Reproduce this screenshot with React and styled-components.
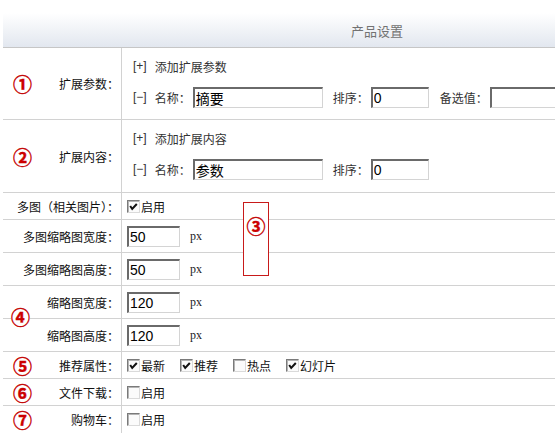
import React from "react";
import styled, { createGlobalStyle } from "styled-components";

const GlobalStyle = createGlobalStyle`
  html, body {
    margin: 0;
    padding: 0;
    background: #fff;
    overflow: hidden;
  }
  body {
    font-family: "Liberation Sans", "Noto Sans CJK SC", sans-serif;
    font-size: 12px;
    color: #222;
  }
`;

const Page = styled.div`
  padding: 13px 0 0 3px;
`;

const Table = styled.div`
  width: 748px;
`;

const Header = styled.div`
  height: 35px;
  box-sizing: border-box;
  border-bottom: 1px solid #c6c6c6;
  background: linear-gradient(#ffffff, #e2e7ef);
  display: flex;
  align-items: center;
  justify-content: center;
  color: #727272;
  font-size: 13px;
  font-family: "Noto Sans CJK SC", sans-serif;
`;

const Row = styled.div`
  display: flex;
  height: ${({ $h }) => $h}px;
  box-sizing: border-box;
  border-bottom: ${({ $last }) => ($last ? "none" : "1px solid #d2d2d2")};
`;

const Label = styled.div`
  position: relative;
  width: 119px;
  flex: none;
  box-sizing: border-box;
  border-right: 1px solid #d2d2d2;
  display: flex;
  align-items: center;
  justify-content: flex-end;
  padding-right: 2px;
  font-family: "Noto Sans CJK SC", sans-serif;
  color: #111;
`;

const Value = styled.div`
  position: relative;
  flex: 1;
  display: flex;
  flex-direction: ${({ $stack }) => ($stack ? "column" : "row")};
  align-items: ${({ $stack }) => ($stack ? "flex-start" : "center")};
  padding: ${({ $stack }) => ($stack ? "7px 0 0 11px" : "0 0 0 5px")};
  gap: ${({ $stack }) => ($stack ? "9px" : "0")};
  font-family: "Noto Sans CJK SC", sans-serif;
  color: #333;
`;

const Line = styled.div`
  display: flex;
  align-items: center;
  height: 22px;
  white-space: nowrap;
`;

const Bracket = styled.span`
  font-family: "Liberation Sans", sans-serif;
  margin-right: 8px;
`;

const FieldLabel = styled.span`
  margin: 0 2px 0 ${({ $gap }) => $gap}px;
`;

const TextInput = styled.input`
  width: ${({ $w }) => $w}px;
  height: 21px;
  box-sizing: border-box;
  margin: 0 0 0 ${({ $ml }) => $ml || 0}px;
  padding: 1px 0 0 1px;
  border-style: solid;
  border-width: 2px 1px 1px 2px;
  border-color: #6a6a6a #d4d4d4 #d4d4d4 #6a6a6a;
  background: #fff;
  font-family: "Liberation Sans", "Noto Sans CJK SC", sans-serif;
  font-size: 14px;
  color: #000;
  outline: none;
`;

const Unit = styled.span`
  margin-left: 10px;
  font-family: "Liberation Serif", serif;
  font-size: 12px;
  color: #222;
`;

const Mark = styled.span`
  margin-right: auto;
  margin-left: 10px;
  color: #d00000;
  font-family: "Noto Sans CJK SC", sans-serif;
  font-weight: 700;
  font-size: 19px;
  line-height: 19px;
  -webkit-text-stroke: 0.4px #c00000;
`;

const FloatMark = styled(Mark)`
  position: absolute;
  left: 0;
  top: ${({ $top }) => $top}px;
  margin: 0 0 0 8px;
  background: #fff;
`;

const Callout = styled.div`
  position: absolute;
  left: 121px;
  top: 9px;
  width: 26px;
  height: 74px;
  box-sizing: border-box;
  border: 1px solid #c81a1a;
  background: #fff;
  z-index: 1;
  display: flex;
  justify-content: center;
  padding-top: 13px;
  color: #d00000;
  font-family: "Noto Sans CJK SC", sans-serif;
  font-weight: 700;
  font-size: 19px;
  line-height: 19px;
  -webkit-text-stroke: 0.4px #c00000;
`;

const Options = styled.div`
  display: flex;
  align-items: center;
`;

const CheckItem = styled.label`
  display: inline-flex;
  align-items: center;
  gap: 1px;
  margin-right: ${({ $mr }) => $mr ?? 15}px;
  color: #111;
`;

const Box = styled.span`
  width: 13px;
  height: 13px;
  box-sizing: border-box;
  border-style: solid;
  border-width: 1px;
  border-color: #7a7a7a #dadada #dadada #7a7a7a;
  box-shadow: inset 1px 1px 0 #b4b4b4;
  background: #fbfbfb;
  display: inline-flex;
  svg {
    display: block;
  }
`;

const Check = ({ on, children, mr }) => (
  <CheckItem $mr={mr}>
    <Box>
      {on && (
        <svg width="11" height="11" viewBox="0 0 11 11">
          <polyline
            points="2.2,5 4.2,8 8.8,3"
            fill="none"
            stroke="#111"
            strokeWidth="2"
          />
        </svg>
      )}
    </Box>
    {children}
  </CheckItem>
);

const SizeRow = ({ label, value }) => (
  <>
    <Label>{label}</Label>
    <Value>
      <TextInput $w={53} defaultValue={value} />
      <Unit>px</Unit>
    </Value>
  </>
);

export default function App() {
  return (
    <Page>
      <GlobalStyle />
      <Table>
        <Header>产品设置</Header>

        <Row $h={72}>
          <Label>
            <Mark>①</Mark>扩展参数：
          </Label>
          <Value $stack>
            <Line>
              <Bracket>[+]</Bracket>添加扩展参数
            </Line>
            <Line>
              <Bracket>[−]</Bracket>名称：
              <TextInput $w={130} $ml={2} defaultValue="摘要" />
              <FieldLabel $gap={10}>排序：</FieldLabel>
              <TextInput $w={58} defaultValue="0" />
              <FieldLabel $gap={11}>备选值：</FieldLabel>
              <TextInput $w={130} defaultValue="" />
            </Line>
          </Value>
        </Row>

        <Row $h={73}>
          <Label>
            <Mark>②</Mark>扩展内容：
          </Label>
          <Value $stack>
            <Line>
              <Bracket>[+]</Bracket>添加扩展内容
            </Line>
            <Line>
              <Bracket>[−]</Bracket>名称：
              <TextInput $w={130} $ml={2} defaultValue="参数" />
              <FieldLabel $gap={10}>排序：</FieldLabel>
              <TextInput $w={58} defaultValue="0" />
            </Line>
          </Value>
        </Row>

        <Row $h={27}>
          <Label>多图（相关图片）：</Label>
          <Value>
            <Check on>启用</Check>
            <Callout>③</Callout>
          </Value>
        </Row>

        <Row $h={33}>
          <SizeRow label="多图缩略图宽度：" value="50" />
        </Row>
        <Row $h={33}>
          <SizeRow label="多图缩略图高度：" value="50" />
        </Row>
        <Row $h={33}>
          <Label>
            缩略图宽度：
            <FloatMark $top={21}>④</FloatMark>
          </Label>
          <Value>
            <TextInput $w={53} defaultValue="120" />
            <Unit>px</Unit>
          </Value>
        </Row>
        <Row $h={33}>
          <SizeRow label="缩略图高度：" value="120" />
        </Row>

        <Row $h={27}>
          <Label>
            <Mark>⑤</Mark>推荐属性：
          </Label>
          <Value>
            <Options>
              <Check on>最新</Check>
              <Check on>推荐</Check>
              <Check>热点</Check>
              <Check on>幻灯片</Check>
            </Options>
          </Value>
        </Row>
        <Row $h={27}>
          <Label>
            <Mark>⑥</Mark>文件下载：
          </Label>
          <Value>
            <Check>启用</Check>
          </Value>
        </Row>
        <Row $h={27} $last>
          <Label>
            <Mark>⑦</Mark>购物车：
          </Label>
          <Value>
            <Check>启用</Check>
          </Value>
        </Row>
      </Table>
    </Page>
  );
}
